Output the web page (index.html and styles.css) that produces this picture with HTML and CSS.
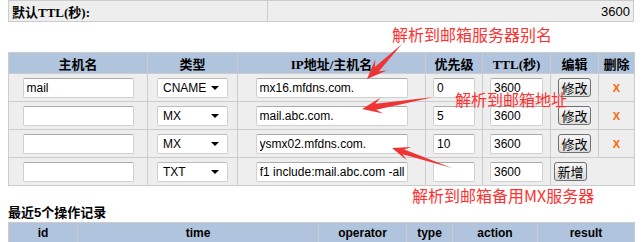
FILE: index.html
```html
<!DOCTYPE html>
<html lang="zh-CN">
<head>
    <meta charset="UTF-8">
    <meta name="viewport" content="width=device-width, initial-scale=1.0">
    <title>域名解析记录</title>
    <link rel="stylesheet" href="styles.css">
</head>
<body>
    <div class="page">
        <table class="ttl-table">
            <tr>
                <td class="ttl-label">默认TTL(秒):</td>
                <td class="ttl-value">3600</td>
            </tr>
        </table>

        <table class="record-table">
            <colgroup>
                <col class="col-host">
                <col class="col-type">
                <col class="col-addr">
                <col class="col-prio">
                <col class="col-ttl">
                <col class="col-edit">
                <col class="col-del">
            </colgroup>
            <thead>
                <tr>
                    <th>主机名</th>
                    <th>类型</th>
                    <th>IP地址/主机名</th>
                    <th>优先级</th>
                    <th>TTL(秒)</th>
                    <th>编辑</th>
                    <th>删除</th>
                </tr>
            </thead>
            <tbody>
                <tr>
                    <td><input class="field host-input" type="text" value="mail"></td>
                    <td>
                        <span class="select-wrap">
                            <select class="type-select">
                                <option selected>CNAME</option>
                                <option>MX</option>
                                <option>TXT</option>
                                <option>A</option>
                            </select>
                        </span>
                    </td>
                    <td><input class="field addr-input" type="text" value="mx16.mfdns.com."></td>
                    <td><input class="field prio-input" type="text" value="0"></td>
                    <td><input class="field ttl-input" type="text" value="3600"></td>
                    <td><button class="btn">修改</button></td>
                    <td><span class="del">X</span></td>
                </tr>
                <tr>
                    <td><input class="field host-input" type="text" value=""></td>
                    <td>
                        <span class="select-wrap">
                            <select class="type-select">
                                <option>CNAME</option>
                                <option selected>MX</option>
                                <option>TXT</option>
                                <option>A</option>
                            </select>
                        </span>
                    </td>
                    <td><input class="field addr-input" type="text" value="mail.abc.com."></td>
                    <td><input class="field prio-input" type="text" value="5"></td>
                    <td><input class="field ttl-input" type="text" value="3600"></td>
                    <td><button class="btn">修改</button></td>
                    <td><span class="del">X</span></td>
                </tr>
                <tr>
                    <td><input class="field host-input" type="text" value=""></td>
                    <td>
                        <span class="select-wrap">
                            <select class="type-select">
                                <option>CNAME</option>
                                <option selected>MX</option>
                                <option>TXT</option>
                                <option>A</option>
                            </select>
                        </span>
                    </td>
                    <td><input class="field addr-input" type="text" value="ysmx02.mfdns.com."></td>
                    <td><input class="field prio-input" type="text" value="10"></td>
                    <td><input class="field ttl-input" type="text" value="3600"></td>
                    <td><button class="btn">修改</button></td>
                    <td><span class="del">X</span></td>
                </tr>
                <tr>
                    <td><input class="field host-input" type="text" value=""></td>
                    <td>
                        <span class="select-wrap">
                            <select class="type-select">
                                <option>CNAME</option>
                                <option>MX</option>
                                <option selected>TXT</option>
                                <option>A</option>
                            </select>
                        </span>
                    </td>
                    <td><input class="field addr-input" type="text" dir="rtl" value="v=spf1 include:mail.abc.com -all"></td>
                    <td><input class="field prio-input" type="text" value=""></td>
                    <td><input class="field ttl-input" type="text" value="3600"></td>
                    <td class="add-cell" colspan="2"><button class="btn">新增</button></td>
                </tr>
            </tbody>
        </table>

        <h4 class="log-title">最近5个操作记录</h4>
        <table class="log-table">
            <colgroup>
                <col class="col-id">
                <col class="col-time">
                <col class="col-operator">
                <col class="col-kind">
                <col class="col-action">
                <col class="col-result">
            </colgroup>
            <thead>
                <tr>
                    <th>id</th>
                    <th>time</th>
                    <th>operator</th>
                    <th>type</th>
                    <th>action</th>
                    <th>result</th>
                </tr>
            </thead>
        </table>

        <!-- annotations drawn over the screenshot -->
        <svg class="arrows" width="642" height="242" viewBox="0 0 642 242">
            <polygon points="402,44 374.8,67 375.4,59.2 367,79 386.8,70.6 379,71.2"/>
            <polygon points="434,97 375.3,103.7 380.4,97.8 362,109 383,113.6 376.3,109.7"/>
            <polygon points="452,168 404.2,149.4 411.3,147.1 392,148 406.9,160.3 402.6,154.2"/>
        </svg>
        <span class="note note-alias">解析到邮箱服务器别名</span>
        <span class="note note-mail">解析到邮箱地址</span>
        <span class="note note-backup">解析到邮箱备用MX服务器</span>
    </div>
</body>
</html>
```

FILE: styles.css
```css
body {
    margin: 0;
    font-family: "Liberation Sans", Arial, "Noto Sans CJK SC", sans-serif;
    font-size: 12px;
    color: #000;
    background: #fff;
}
.page {
    position: relative;
    padding: 0 8px;
    width: 626px;
    height: 242px;
    overflow: hidden;
}
.ttl-table {
    width: 626px;
    border-collapse: collapse;
    background-color: #eee;
    border: 1px solid #ccc;
}
.ttl-table td {
    height: 20px;
    padding: 0 3px;
    border: 1px solid #ccc;
}
.ttl-label {
    width: 252px;
    font-family: "Liberation Serif", "Noto Sans CJK SC", serif;
    font-weight: bold;
    font-size: 13px;
}
.ttl-value {
    text-align: right;
    font-size: 13px;
}
.record-table,
.log-table {
    width: 626px;
    border-collapse: collapse;
    table-layout: fixed;
}
.record-table {
    margin-top: 30px;
}
.record-table th,
.log-table th {
    background-color: #b0c4de;
    border: 1px solid #ccc;
    height: 20px;
    padding: 0;
    text-align: center;
    font-weight: bold;
}
.record-table th {
    font-family: "Liberation Serif", "Noto Sans CJK SC", serif;
    font-size: 13px;
}
.log-table th {
    font-size: 12px;
}
.record-table td {
    background-color: #eee;
    border: 1px solid #ccc;
    height: 27px;
    padding: 0;
    text-align: center;
    vertical-align: middle;
}
.col-host { width: 139px; }
.col-type { width: 90px; }
.col-addr { width: 188px; }
.col-prio { width: 57px; }
.col-ttl { width: 68px; }
.col-edit { width: 48px; }
.col-del { width: 36px; }
.col-id { width: 69px; }
.col-time { width: 241px; }
.col-operator { width: 88px; }
.col-kind { width: 46px; }
.col-action { width: 85px; }
.col-result { width: 97px; }
.field {
    box-sizing: border-box;
    height: 20px;
    margin: 0;
    padding: 0 2px 0 3px;
    border: 1px solid #d0d0d0;
    border-top-color: #ababab;
    border-radius: 2px;
    background: #fff;
    font-family: "Liberation Sans", Arial, sans-serif;
    font-size: 12px;
    color: #000;
    vertical-align: middle;
}
.host-input { width: 111px; }
.addr-input { width: 152px; }
.prio-input { width: 42px; }
.ttl-input { width: 53px; }
.select-wrap {
    position: relative;
    display: inline-block;
    vertical-align: middle;
}
.select-wrap::after {
    content: "";
    position: absolute;
    right: 9px;
    top: 8px;
    border-left: 4px solid transparent;
    border-right: 4px solid transparent;
    border-top: 4px solid #000;
    pointer-events: none;
}
.type-select {
    -webkit-appearance: none;
    appearance: none;
    box-sizing: border-box;
    width: 71px;
    height: 20px;
    margin: 0;
    padding: 0 0 0 5px;
    border: 1px solid #d0d0d0;
    border-top-color: #bdbdbd;
    border-radius: 2px;
    background: #fff;
    font-family: "Liberation Sans", Arial, sans-serif;
    font-size: 12px;
    color: #000;
    display: block;
}
.btn {
    box-sizing: border-box;
    width: 33px;
    height: 19px;
    padding: 0;
    margin: 0;
    border: 1px solid #707070;
    border-radius: 3px;
    background: linear-gradient(#f6f6f6, #dcdcdc);
    font-family: "Noto Sans CJK SC", sans-serif;
    font-size: 13px;
    line-height: 17px;
    color: #000;
    vertical-align: middle;
}
.record-table td.add-cell {
    text-align: left;
    padding-left: 3px;
}
.del {
    color: #ff6600;
    font-size: 11px;
    font-weight: bold;
}
.log-title {
    margin: 18px 0 0;
    font-family: "Liberation Sans", Arial, "Noto Sans CJK SC", sans-serif;
    font-size: 13px;
    line-height: 18px;
    font-weight: bold;
}
.arrows {
    position: absolute;
    left: 0;
    top: 0;
    fill: #ee3535;
    pointer-events: none;
}
.note {
    position: absolute;
    font-family: "Noto Sans CJK SC", sans-serif;
    font-size: 16px;
    line-height: 16px;
    color: #ff3030;
    white-space: nowrap;
}
.note-alias { left: 392px; top: 26px; }
.note-mail { left: 455px; top: 91px; }
.note-backup { left: 412px; top: 187px; }
```
